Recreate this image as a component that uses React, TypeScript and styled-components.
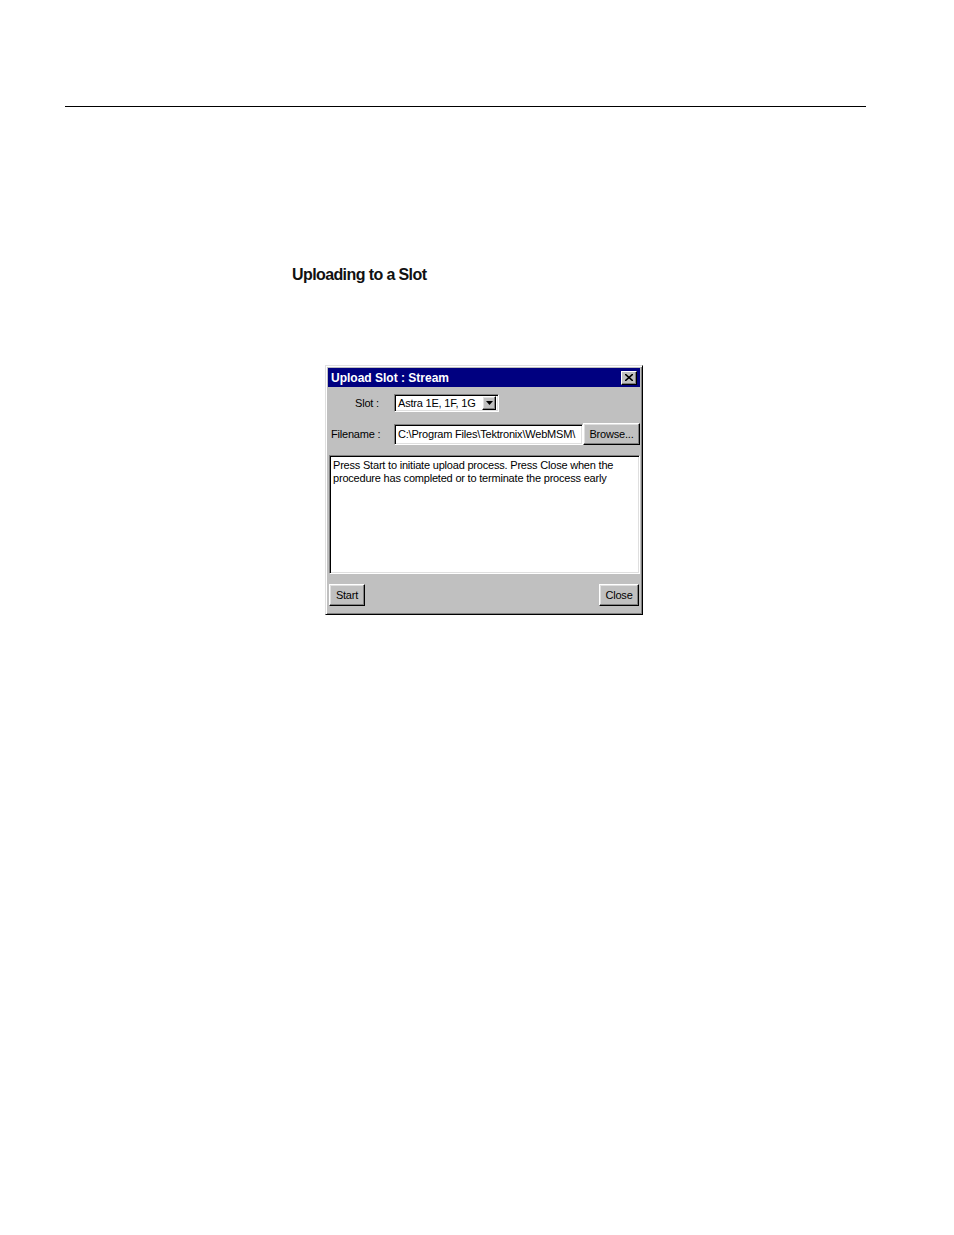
import styled, { createGlobalStyle } from "styled-components";

const Global = createGlobalStyle`
  html, body {
    margin: 0;
    padding: 0;
    background: #fff;
  }
  body {
    width: 954px;
    height: 1235px;
    font-family: "Liberation Sans", Arial, sans-serif;
  }
`;

const Page = styled.div`
  padding-top: 106px;
`;

const Rule = styled.hr`
  margin: 0 0 0 65px;
  width: 801px;
  border: none;
  border-top: 1px solid #000;
`;

const Heading = styled.h2`
  margin: 159px 0 0 292px;
  font-family: "Liberation Sans", Arial, sans-serif;
  font-size: 16px;
  font-weight: 700;
  letter-spacing: -0.6px;
  line-height: 18px;
  color: #111;
`;

const Dialog = styled.div`
  margin: 81px 0 0 325px;
  width: 318px;
  box-sizing: border-box;
  background: #c0c0c0;
  border: 1px solid;
  border-color: #dfdfdf #000 #000 #dfdfdf;
  box-shadow: inset 1px 1px 0 #fff, inset -1px -1px 0 #808080;
  padding: 2px;
  font-family: "Liberation Sans", Arial, sans-serif;
  font-size: 11px;
  letter-spacing: -0.2px;
  color: #000;
`;

const TitleBar = styled.div`
  height: 19px;
  background: #000080;
  color: #fff;
  display: flex;
  align-items: center;
  justify-content: space-between;
  padding: 0 3px 0 3px;
  font-weight: 700;
  font-size: 12px;
  letter-spacing: 0;
`;

const XButton = styled.div`
  width: 16px;
  height: 14px;
  box-sizing: border-box;
  background: #c0c0c0;
  border: 1px solid;
  border-color: #fff #000 #000 #fff;
  box-shadow: inset -1px -1px 0 #808080;
  display: flex;
  align-items: center;
  justify-content: center;
`;

const Body = styled.div`
  padding: 7px 1px 0 1px;
  display: flex;
  flex-direction: column;
`;

const Row = styled.div<{ $mt?: number }>`
  display: flex;
  align-items: center;
  margin-top: ${(p) => p.$mt ?? 0}px;
`;

const Label = styled.span<{ $w: number; $pl?: number }>`
  width: ${(p) => p.$w}px;
  padding-left: ${(p) => p.$pl ?? 0}px;
  box-sizing: border-box;
  flex: none;
`;

const Sunken = styled.div<{ $w: number; $h: number }>`
  width: ${(p) => p.$w}px;
  height: ${(p) => p.$h}px;
  box-sizing: border-box;
  background: #fff;
  border: 1px solid;
  border-color: #808080 #fff #fff #808080;
  box-shadow: inset 1px 1px 0 #000, inset -1px -1px 0 #dfdfdf;
  display: flex;
  align-items: center;
  padding-left: 3px;
  white-space: nowrap;
  overflow: hidden;
  flex: none;
`;

const SelectBox = styled(Sunken)`
  justify-content: space-between;
  padding-right: 2px;
`;

const Button = styled.div<{ $w: number; $h: number }>`
  width: ${(p) => p.$w}px;
  height: ${(p) => p.$h}px;
  box-sizing: border-box;
  background: #c0c0c0;
  border: 1px solid;
  border-color: #fff #000 #000 #fff;
  box-shadow: inset -1px -1px 0 #808080, inset 1px 1px 0 #dfdfdf;
  display: flex;
  align-items: center;
  justify-content: center;
  flex: none;
`;

const Message = styled(Sunken)`
  display: block;
  padding: 3px 3px;
  white-space: normal;
  line-height: 13px;
  margin-top: 10px;
`;

const Footer = styled.div`
  display: flex;
  justify-content: space-between;
  margin-top: 10px;
  padding-bottom: 6px;
`;

const Arrow = () => (
  <svg width="7" height="4" viewBox="0 0 7 4">
    <path d="M0 0h7L3.5 4z" fill="#000" />
  </svg>
);

const Cross = () => (
  <svg width="8" height="7" viewBox="0 0 8 7">
    <path d="M0 0L8 7M8 0L0 7" stroke="#000" strokeWidth="1.6" />
  </svg>
);

export default function App() {
  return (
    <Page>
      <Global />
      <Rule />
      <Heading>Uploading to a Slot</Heading>
      <Dialog>
        <TitleBar>
          <span>Upload Slot : Stream</span>
          <XButton>
            <Cross />
          </XButton>
        </TitleBar>
        <Body>
          <Row>
            <Label $w={65} $pl={26}>Slot :</Label>
            <SelectBox $w={105} $h={18}>
              <span>Astra 1E, 1F, 1G</span>
              <Button $w={14} $h={14}>
                <Arrow />
              </Button>
            </SelectBox>
          </Row>
          <Row $mt={11}>
            <Label $w={65} $pl={2}>Filename :</Label>
            <Sunken $w={189} $h={21}>C:\Program Files\Tektronix\WebMSM\</Sunken>
            <Button $w={57} $h={22}>Browse...</Button>
          </Row>
          <Message $w={311} $h={119}>
            Press Start to initiate upload process. Press Close when the
            <br />
            procedure has completed or to terminate the process early
          </Message>
          <Footer>
            <Button $w={36} $h={22}>Start</Button>
            <Button $w={40} $h={22}>Close</Button>
          </Footer>
        </Body>
      </Dialog>
    </Page>
  );
}
